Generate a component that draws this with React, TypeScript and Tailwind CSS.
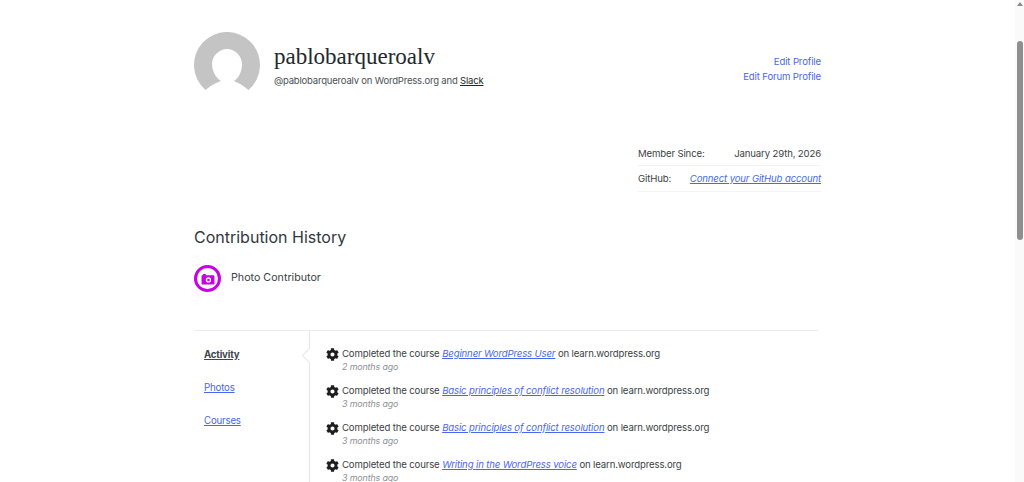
import React from 'react';
import { FaCog } from 'react-icons/fa';

const activity = [
  { course: 'Beginner WordPress User', ago: '2 months ago' },
  { course: 'Basic principles of conflict resolution', ago: '3 months ago' },
  { course: 'Basic principles of conflict resolution', ago: '3 months ago' },
  { course: 'Writing in the WordPress voice', ago: '3 months ago' },
];

const Avatar = () => (
  <svg width="67" height="67" viewBox="0 0 67 67" className="shrink-0">
    <path
      d="M11.5 58 A33 33 0 1 1 54.5 58 C50 54 45 51 40 49 C45 46 48 39 48 32 C48 24 41 17 33 17 C25 17 18 24 18 32 C18 39 22 46 27 49 C21 51 16 54 11.5 58 Z"
      fill="#c4c4c4"
    />
  </svg>
);

const PhotoBadge = () => (
  <div className="w-[27px] h-[27px] rounded-full border-[3px] border-[#c800e6] flex items-center justify-center shrink-0">
    <svg width="14" height="12" viewBox="0 0 15 13">
      <path
        fillRule="evenodd"
        d="M2 1h3v1.5h8.5a1 1 0 0 1 1 1v8a1 1 0 0 1-1 1h-12a1 1 0 0 1-1-1v-8a1 1 0 0 1 1-1H2V1z M8 4.6a2.9 2.9 0 1 0 0 5.8a2.9 2.9 0 0 0 0-5.8z"
        fill="#c800e6"
      />
      <circle cx="8" cy="7.5" r="1.4" fill="#c800e6" />
    </svg>
  </div>
);

export default function App() {
  return (
    <div className="h-[482px] overflow-hidden flex bg-white font-['Inter',sans-serif] text-[#3a3f45]">
      <main className="flex-1 pl-[194px] pt-[32px]">
        <div className="w-[627px]">
          <header className="flex justify-between h-[67px]">
            <div className="flex gap-[13px]">
              <Avatar />
              <div className="pt-[10px]">
                <h1 className="font-['Liberation_Serif',serif] text-[23px] leading-[30px] text-[#23282d]">pablobarqueroalv</h1>
                <p className="text-[9.5px] tracking-[-0.02em] leading-[14px] mt-[2px] text-[#4a5057]">
                  @pablobarqueroalv on WordPress.org and{' '}
                  <a href="#" className="underline text-[#23282d]">Slack</a>
                </p>
              </div>
            </div>
            <div className="pt-[22px] flex flex-col items-end text-[9.6px] tracking-[-0.015em] leading-[15px] text-[#4a67ec]">
              <a href="#">Edit Profile</a>
              <a href="#">Edit Forum Profile</a>
            </div>
          </header>

          <dl className="w-[183px] ml-auto mt-[41px] text-[9.6px] tracking-[-0.015em] whitespace-nowrap">
            <div className="flex justify-between h-[26px] pt-[3px] items-center border-b border-[#f3f3f3]">
              <dt>Member Since:</dt>
              <dd>January 29th, 2026</dd>
            </div>
            <div className="flex justify-between h-[26px] pt-[1px] items-center border-b border-[#f3f3f3]">
              <dt>GitHub:</dt>
              <dd><a href="#" className="italic underline text-[#4a67ec]">Connect your GitHub account</a></dd>
            </div>
          </dl>

          <h2 className="text-[16px] leading-[20px] mt-[35px] text-[#32373c]">Contribution History</h2>
          <div className="flex items-center gap-[10px] mt-[18px]">
            <PhotoBadge />
            <span className="text-[10.7px]">Photo Contributor</span>
          </div>

          <div className="mt-[38px] w-[624px] border-t border-[#ececec] flex h-[200px]">
            <nav className="w-[116px] border-r border-[#e6e7e9] pl-[10px] pt-[17px] flex flex-col gap-[19px] text-[9.7px] tracking-[-0.02em] leading-[14px] relative">
              <a href="#" className="font-bold underline text-[#40464d]">Activity</a>
              <a href="#" className="underline text-[#4a67ec]">Photos</a>
              <a href="#" className="underline text-[#4a67ec]">Courses</a>
              <span className="absolute right-[-6px] top-[19px] w-[11px] h-[11px] rotate-45 bg-white border-l border-b border-[#e6e7e9]" />
            </nav>
            <ul className="pl-[16px] pt-[16px] flex flex-col gap-[10px]">
              {activity.map((item, i) => (
                <li key={i} className="flex gap-[3px]">
                  <FaCog className="w-[13px] h-[13px] mt-[1px] text-[#1e1e1e] shrink-0" />
                  <div>
                    <p className="text-[9.6px] tracking-[-0.015em] leading-[13px]">
                      Completed the course{' '}
                      <a href="#" className="italic underline text-[#4a67ec]">{item.course}</a>{' '}
                      on learn.wordpress.org
                    </p>
                    <p className="text-[8.9px] tracking-[-0.015em] leading-[14px] italic text-[#8c9196]">{item.ago}</p>
                  </div>
                </li>
              ))}
            </ul>
          </div>
        </div>
      </main>
      <div className="w-[9px] bg-[#fafafa] flex flex-col items-center shrink-0">
        <div className="mt-[2px] w-0 h-0 border-x-[3px] border-x-transparent border-b-[4px] border-b-[#8a8a8a]" />
        <div className="mt-[35px] w-[6px] h-[199px] rounded-full bg-[#8f8f8f]" />
      </div>
    </div>
  );
}
